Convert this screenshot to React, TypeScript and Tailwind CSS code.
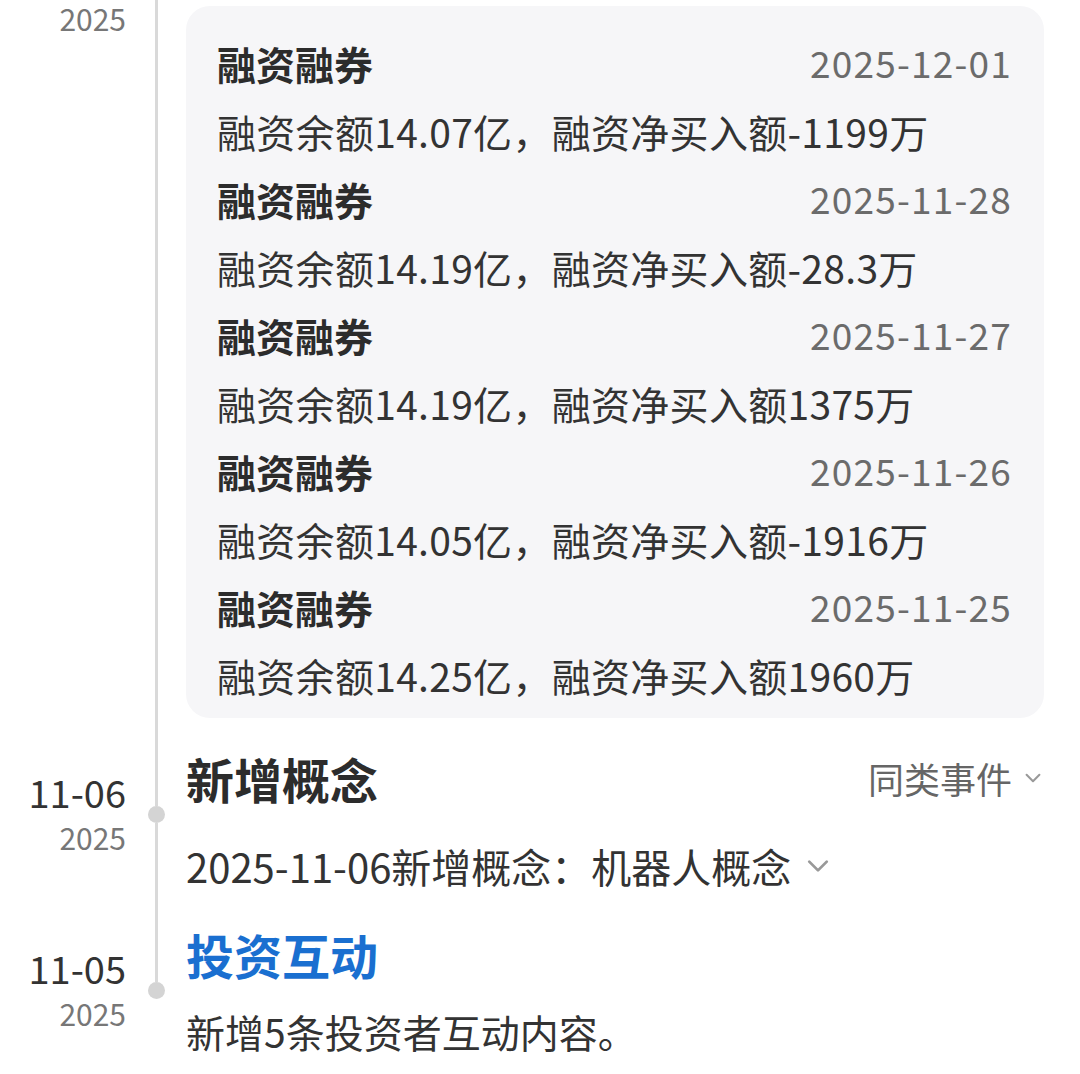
import React from "react";

const FONT = { fontFamily: '"Noto Sans CJK SC", "Noto Sans", sans-serif' };

const MARGIN_ROWS = [
  { date: "2025-12-01", text: "融资余额14.07亿，融资净买入额-1199万" },
  { date: "2025-11-28", text: "融资余额14.19亿，融资净买入额-28.3万" },
  { date: "2025-11-27", text: "融资余额14.19亿，融资净买入额1375万" },
  { date: "2025-11-26", text: "融资余额14.05亿，融资净买入额-1916万" },
  { date: "2025-11-25", text: "融资余额14.25亿，融资净买入额1960万" },
];

function Chevron({ className }: { className?: string }) {
  return (
    <svg viewBox="0 0 24 24" className={className} fill="none" stroke="currentColor" strokeWidth={2.2} strokeLinecap="round" strokeLinejoin="round">
      <path d="M5 8.5l7 7 7-7" />
    </svg>
  );
}

function DateLabel({ md, top }: { md: string; top: string }) {
  return (
    <div className={`w-[126px] shrink-0 text-right ${top}`}>
      <div className="text-[38px] leading-[44px] text-[#333]">{md}</div>
      <div className="mt-[6px] text-[30px] leading-[34px] text-[#777]">2025</div>
    </div>
  );
}

function Rail({ seg, last }: { seg: string; last?: boolean }) {
  return (
    <div className="flex w-[60px] shrink-0 flex-col items-center">
      <div className={`w-[3px] bg-[#d9d9d9] ${seg}`} />
      <div className="h-[17px] w-[17px] rounded-full bg-[#d4d4d4]" />
      {!last && <div className="w-[3px] flex-1 bg-[#d9d9d9]" />}
    </div>
  );
}

export default function App() {
  return (
    <div className="min-h-[1074px] w-[1080px] overflow-hidden bg-white" style={FONT}>
      {/* margin trading block, its date header is scrolled off */}
      <div className="flex">
        <div className="w-[126px] shrink-0 pt-[1px] text-right text-[30px] leading-[34px] text-[#777]">2025</div>
        <div className="flex w-[60px] shrink-0 justify-center">
          <div className="w-[3px] bg-[#d9d9d9]" />
        </div>
        <div className="mr-[36px] mt-[6px] flex-1 rounded-[24px] bg-[#f6f6f8] pl-[31px] pr-[32px] pt-[23px] pb-[9px]">
          {MARGIN_ROWS.map((row) => (
            <div key={row.date}>
              <div className="flex h-[68px] items-center justify-between">
                <span className="text-[39px] font-bold text-[#2c2c2c]">融资融券</span>
                <span className="text-[37px] tracking-[1.2px] text-[#6b6b6b]">{row.date}</span>
              </div>
              <div className="flex h-[68px] items-center text-[39px] tracking-[0.3px] text-[#333]">{row.text}</div>
            </div>
          ))}
        </div>
      </div>

      {/* 新增概念 */}
      <div className="flex">
        <DateLabel md="11-06" top="pt-[52px]" />
        <Rail seg="h-[88px]" />
        <div className="mr-[36px] flex-1 pt-[20px]">
          <div className="flex h-[80px] items-center justify-between">
            <span className="text-[48px] font-bold text-[#2c2c2c]">新增概念</span>
            <span className="flex items-center text-[36px] text-[#666]">
              同类事件
              <Chevron className="ml-[10px] h-[22px] w-[22px] text-[#999]" />
            </span>
          </div>
          <div className="mt-[20px] flex h-[56px] items-center text-[40px] text-[#333]">
            2025-11-06新增概念：机器人概念
            <Chevron className="ml-[12px] h-[30px] w-[30px] text-[#999]" />
          </div>
        </div>
      </div>

      {/* 投资互动 */}
      <div className="flex">
        <DateLabel md="11-05" top="pt-[52px]" />
        <Rail seg="h-[88px]" last />
        <div className="mr-[36px] flex-1 pt-[20px]">
          <div className="flex h-[80px] items-center">
            <span className="text-[48px] font-bold text-[#1a6fd0]">投资互动</span>
          </div>
          <div className="mt-[9px] flex h-[56px] items-center text-[39px] text-[#333]">新增5条投资者互动内容。</div>
        </div>
      </div>
    </div>
  );
}
